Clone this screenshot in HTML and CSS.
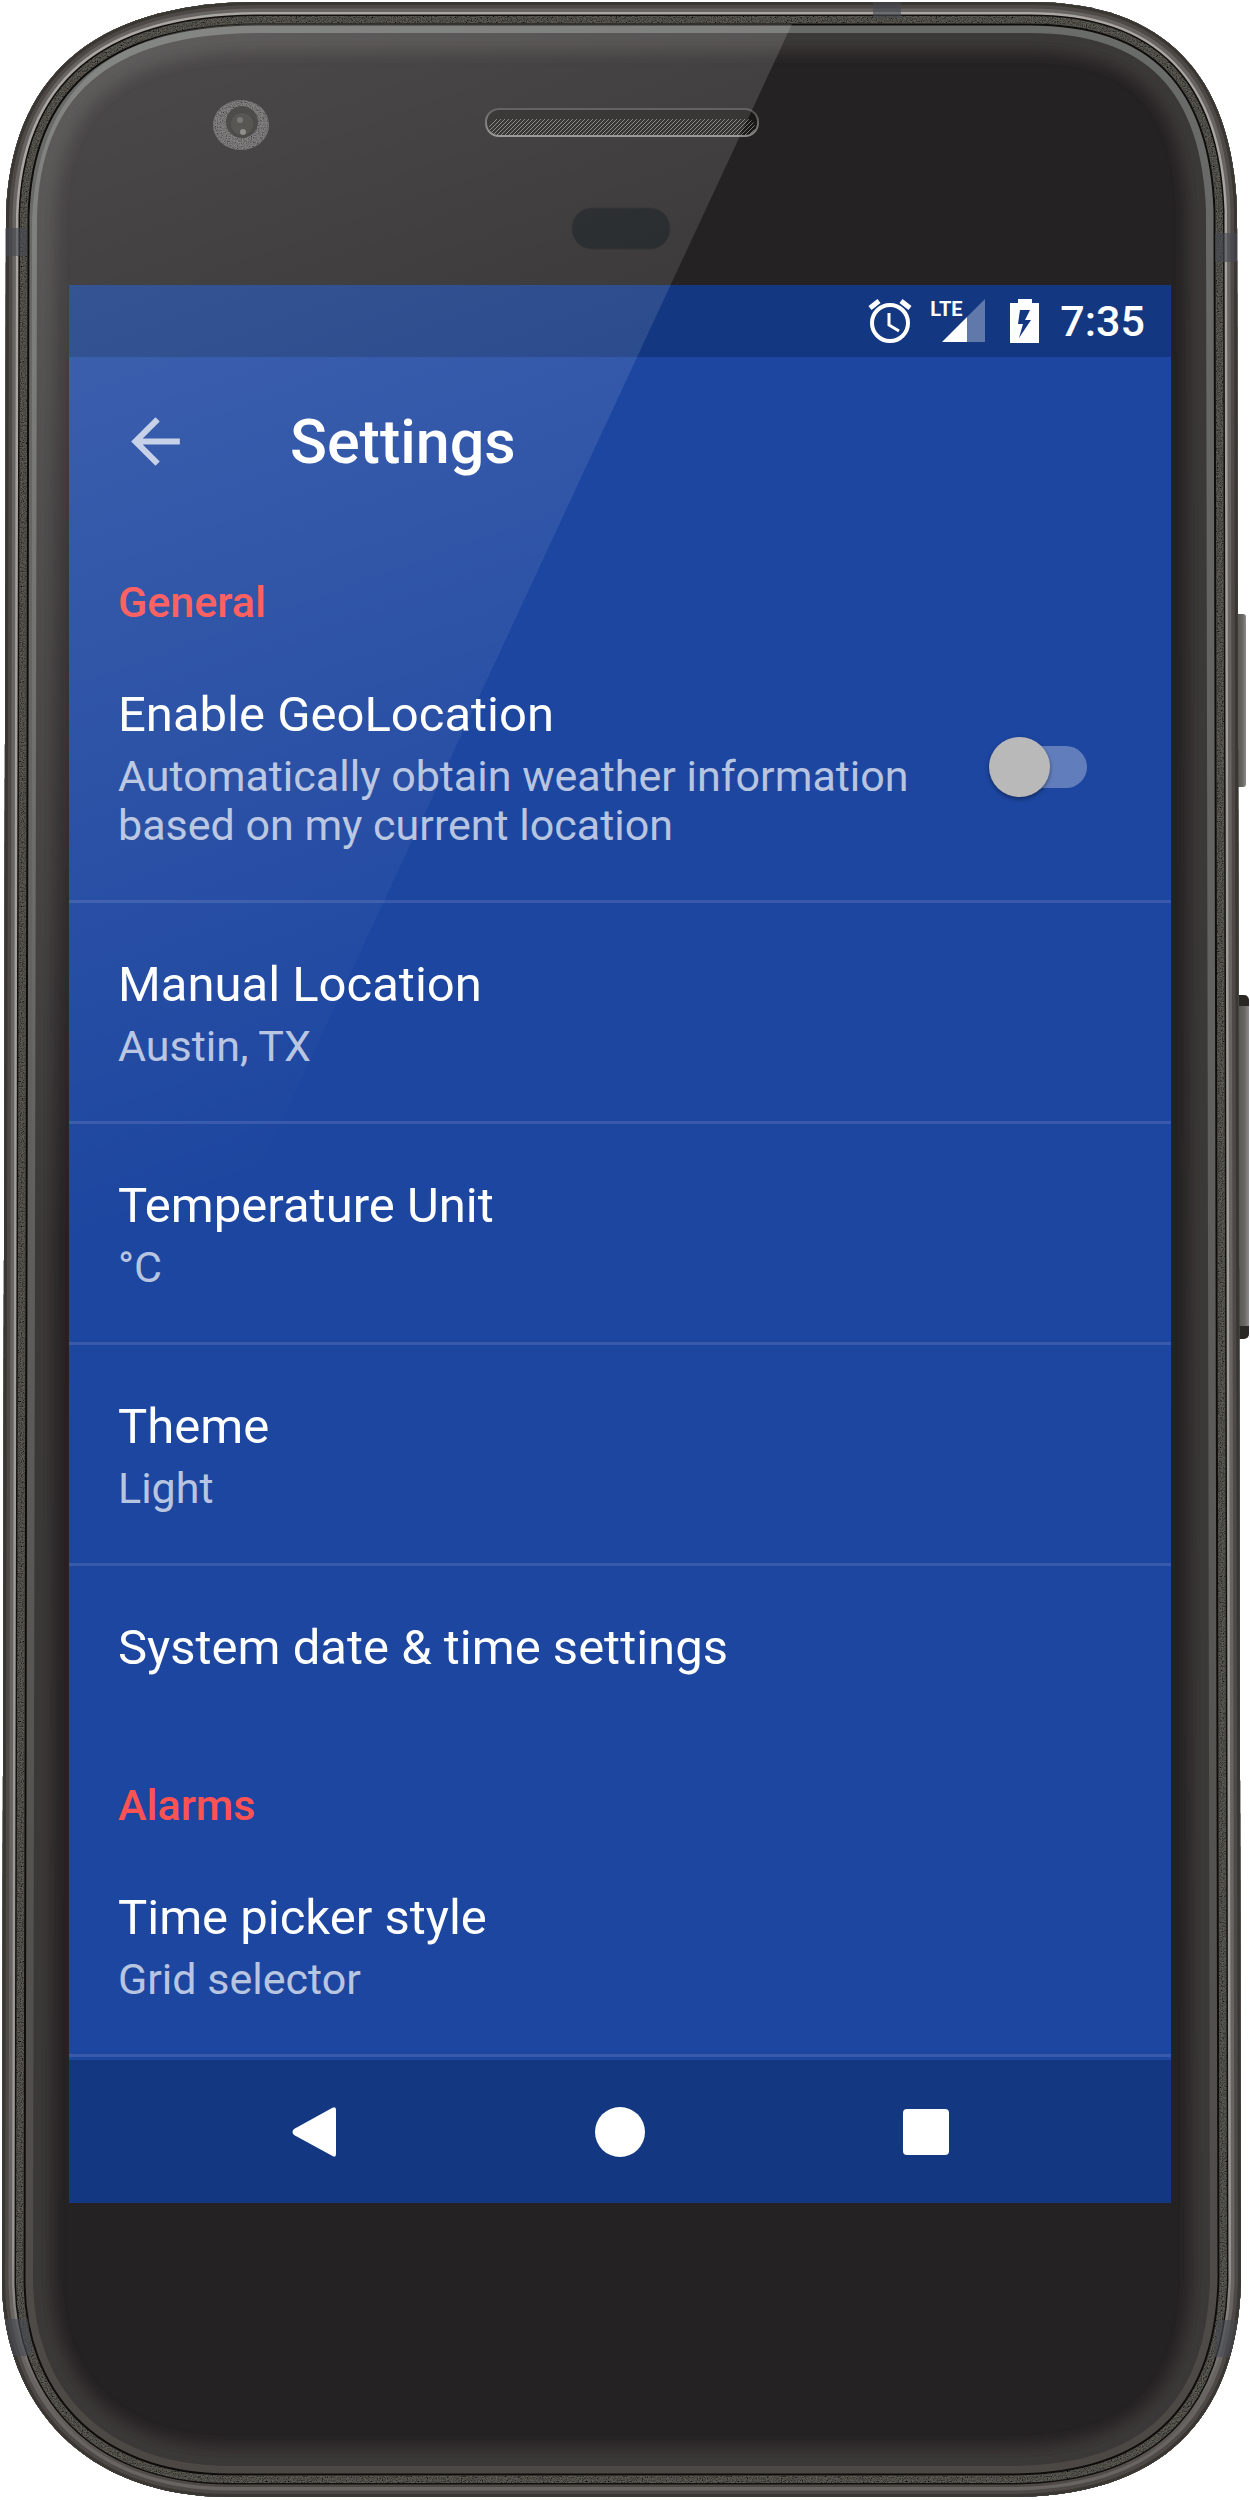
FILE: index.html
```html
<!DOCTYPE html>
<html lang="en">
<head>
<meta charset="utf-8">
<meta name="viewport" content="width=device-width, initial-scale=1">
<title>Settings</title>
<link rel="stylesheet" href="styles.css">
</head>
<body>
<div class="device">
  <svg class="shell" viewBox="0 0 1250 2500" preserveAspectRatio="none" aria-hidden="true">
    <defs>
      <path id="body" d="M6 215C10 80 90 2 260 2H1030C1165 2 1232 75 1237 210L1241 2280C1238 2400 1180 2497 1010 2497H230C80 2497 2 2400 2 2280Z"/>
      <clipPath id="bodyClip"><use href="#body"/></clipPath>
      <filter id="soft" x="-5%" y="-5%" width="110%" height="110%"><feGaussianBlur stdDeviation="7"/></filter>
      <filter id="grain" x="0" y="0" width="100%" height="100%">
        <feTurbulence type="fractalNoise" baseFrequency="0.8" numOctaves="2" result="n"/>
        <feColorMatrix in="n" type="matrix" values="0 0 0 0 0  0 0 0 0 0  0 0 0 0 0  0 2 0 0 -0.7" result="d"/>
        <feComposite in="d" in2="SourceGraphic" operator="in" result="g"/>
        <feMerge><feMergeNode in="SourceGraphic"/><feMergeNode in="g"/></feMerge>
      </filter>
      <linearGradient id="rim" x1="0" y1="0" x2="0" y2="1">
        <stop offset="0" stop-color="#6a6c69"/><stop offset=".4" stop-color="#626260"/><stop offset="1" stop-color="#4b4844"/>
      </linearGradient>
      <linearGradient id="shine" x1="0" y1="0" x2="0" y2="1">
        <stop offset="0" stop-color="#aaa6a2"/><stop offset=".9" stop-color="#9a9693"/><stop offset="1" stop-color="#4a4541"/>
      </linearGradient>
      <linearGradient id="key" x1="0" y1="0" x2="1" y2="0">
        <stop offset="0" stop-color="#4c4b47"/><stop offset=".7" stop-color="#686762"/><stop offset="1" stop-color="#8d8a8c"/>
      </linearGradient>
      <linearGradient id="slot" x1="0" y1="0" x2="0" y2="1">
        <stop offset="0" stop-color="#4a4848"/><stop offset="1" stop-color="#8a8988"/>
      </linearGradient>
      <pattern id="mesh" width="4" height="4" patternUnits="userSpaceOnUse">
        <path d="M-1 5L5 -1M-1 1L1 -1M3 5L5 3" stroke="#76746f" stroke-width="1"/>
      </pattern>
    </defs>
    <rect x="1234" y="614" width="12" height="173" rx="3" fill="url(#key)"/>
    <rect x="1234" y="995" width="15" height="344" rx="5" fill="#292825"/>
    <rect x="1234" y="1006" width="15" height="320" fill="url(#key)"/>
    <g clip-path="url(#bodyClip)" fill="none">
      <use href="#body" fill="#252223"/>
      <use href="#body" stroke="#3b3938" stroke-width="100" filter="url(#soft)"/>
      <use href="#body" stroke="url(#rim)" stroke-width="62"/>
      <use href="#body" stroke="#0f0d0b" stroke-width="47"/>
      <use href="#body" stroke="#5d5b54" stroke-width="43" filter="url(#grain)"/>
      <use href="#body" stroke="#12100e" stroke-width="28"/>
      <use href="#body" stroke="url(#shine)" stroke-width="25"/>
      <use href="#body" stroke="#686461" stroke-width="20"/>
      <use href="#body" stroke="#4e4946" stroke-width="13"/>
      <use href="#body" stroke="#3a3632" stroke-width="6"/>
      <g fill="#464a52" fill-opacity=".6">
        <path d="M0 228h27v28H0zM873 0h28v18h-28zM1215 233h28v29h-28zM0 2319h28l4 37H0zM1217 2320h28v37h-31z"/>
      </g>
    </g>
    <g class="camera">
      <ellipse cx="241" cy="125" rx="28" ry="25" fill="#6e6c6c" filter="url(#grain)"/>
      <circle cx="242" cy="122" r="16" fill="#2b2a28"/>
      <circle cx="242" cy="124" r="11" fill="#383733"/>
      <circle cx="240" cy="120" r="3" fill="#5f5f5c"/>
      <circle cx="243" cy="132" r="3" fill="#7a7a75"/>
    </g>
    <rect x="486" y="109" width="272" height="27" rx="13" fill="#191817" stroke="url(#slot)" stroke-width="2"/>
    <rect x="489" y="119" width="266" height="16" rx="8" fill="url(#mesh)"/>
    <rect x="572" y="208" width="98" height="41" rx="20" fill="#0e1214" stroke="#1b1919"/>
  </svg>

  <div class="screen">
    <div class="status">
      <svg class="status-icon" viewBox="0 0 44 44" role="img" aria-label="Alarm set">
        <g fill="none" stroke="#fff">
          <circle cx="22" cy="24" r="18" stroke-width="4"/>
          <path d="M2 9L11 2M42 9L33 2" stroke-width="5"/>
          <path d="M21 14V26L31 32" stroke-width="3"/>
        </g>
      </svg>
      <div class="signal">
        <span class="network">LTE</span>
        <svg viewBox="0 0 56 44" role="img" aria-label="Signal strength">
          <path d="M55 0V43H37V18Z" fill="#fff" fill-opacity=".33"/>
          <path d="M12 43L37 18V43Z" fill="#fff"/>
        </svg>
      </div>
      <svg class="battery" viewBox="0 0 29 44" role="img" aria-label="Battery charging">
        <path fill="#fff" fill-rule="evenodd" d="M8 0H22V4H29V44H0V4H8ZM10 11L8 25H13L9 39L21 21H15L20 11Z"/>
      </svg>
      <time class="clock">7:35</time>
    </div>

    <header class="appbar">
      <button class="back" aria-label="Back">
        <svg viewBox="0 0 24 24"><path fill="#fff" fill-opacity=".72" d="M20 11H7.800l5.600-5.600L12 4l-8 8 8 8 1.400-1.400L7.800 13H20v-2z"/></svg>
      </button>
      <h1>Settings</h1>
    </header>

    <main>
      <section>
        <h2>General</h2>
        <label class="row">
          <span class="text">
            <span class="title">Enable GeoLocation</span>
            <span class="summary">Automatically obtain weather information based on my current location</span>
          </span>
          <input class="switch" type="checkbox" role="switch">
        </label>
        <button class="row"><span class="text"><span class="title">Manual Location</span><span class="summary">Austin, TX</span></span></button>
        <button class="row"><span class="text"><span class="title">Temperature Unit</span><span class="summary">°C</span></span></button>
        <button class="row"><span class="text"><span class="title">Theme</span><span class="summary">Light</span></span></button>
        <button class="row last"><span class="text"><span class="title">System date &amp; time settings</span></span></button>
      </section>
      <section>
        <h2>Alarms</h2>
        <button class="row"><span class="text"><span class="title">Time picker style</span><span class="summary">Grid selector</span></span></button>
      </section>
    </main>

    <nav class="navbar" aria-label="System">
      <button aria-label="Back"><svg viewBox="0 0 50 50"><path fill="#fff" d="M43.500 .8Q47 -1.200 47 3V47Q47 51.200 43.500 49L5 28Q2 25 5 22Z"/></svg></button>
      <button aria-label="Home"><svg viewBox="0 0 50 50"><circle cx="25" cy="25" r="25" fill="#fff"/></svg></button>
      <button aria-label="Recent apps"><svg viewBox="0 0 50 50"><rect x="2" y="2" width="46" height="46" rx="4" fill="#fff"/></svg></button>
    </nav>
  </div>

  <svg class="glare" viewBox="0 0 1250 2500" preserveAspectRatio="none" aria-hidden="true">
    <defs>
      <linearGradient id="sheen" gradientUnits="userSpaceOnUse" x1="0" y1="0" x2="408" y2="1128">
        <stop offset="0" stop-color="#fff" stop-opacity=".19"/><stop offset="1" stop-color="#fff" stop-opacity="0"/>
      </linearGradient>
    </defs>
    <path fill="url(#sheen)" d="M32 220C38 96 102 24 260 24H792L230 1232H32Z"/>
  </svg>
</div>
</body>
</html>
```
FILE: styles.css
```css
:root {
  --blue: #1d46a0;
  --blue-dark: #133780;
  --line: #385aab;
  --accent: #ff5252;
}

* {
  box-sizing: border-box;
}

body {
  margin: 0;
  background: #fff;
  color: #fff;
  font-family: Roboto, "Noto Sans", sans-serif;
}

button {
  border: 0;
  padding: 0;
  background: none;
  color: inherit;
  font: inherit;
  text-align: left;
  cursor: pointer;
}

svg {
  display: block;
}

.device {
  position: relative;
  padding: 285px 79px 297px 69px;
}

.shell,
.glare {
  position: absolute;
  inset: 0;
  width: 100%;
  height: 100%;
}

.glare {
  pointer-events: none;
}

.screen {
  position: relative;
  background: var(--blue);
}

/* Status bar */
.status {
  display: flex;
  align-items: center;
  justify-content: flex-end;
  height: 72px;
  padding-right: 26px;
  background: var(--blue-dark);
}

.status-icon {
  width: 44px;
  height: 44px;
}

.signal {
  position: relative;
  margin-left: 18px;
}

.signal svg {
  width: 56px;
  height: 44px;
}

.network {
  position: absolute;
  top: 0;
  left: 0;
  font-size: 20px;
  font-weight: 700;
  line-height: 20px;
}

.battery {
  width: 29px;
  height: 44px;
  margin-left: 24px;
}

.clock {
  margin-left: 21px;
  font-size: 43px;
  font-weight: 500;
  line-height: 50px;
}

/* App bar */
.appbar {
  display: flex;
  align-items: center;
  gap: 98px;
  height: 166px;
  padding: 3px 50px 0;
}

.back svg {
  width: 73px;
  height: 73px;
}

h1 {
  margin: 0;
  font-size: 61px;
  font-weight: 500;
  line-height: 72px;
}

/* Preference list */
h2 {
  margin: 0;
  padding: 55px 49px 6px;
  color: var(--accent);
  font-size: 43px;
  font-weight: 500;
  line-height: 49px;
}

.row {
  display: flex;
  align-items: center;
  gap: 32px;
  width: 100%;
  padding: 54px 84px 50px 49px;
  border-bottom: 3px solid var(--line);
}

.row.last {
  border-bottom: 0;
}

.text {
  display: flex;
  flex: 1;
  flex-direction: column;
  gap: 9px;
}

.title {
  font-size: 49px;
  line-height: 56px;
}

.summary {
  color: rgba(255, 255, 255, 0.7);
  font-size: 43px;
  line-height: 49px;
}

.switch {
  position: relative;
  display: flex;
  align-items: center;
  flex: none;
  width: 98px;
  height: 60px;
  margin: 0 0 4px;
  appearance: none;
}

.switch::before {
  content: "";
  position: absolute;
  inset: 9px 0 9px 14px;
  border-radius: 21px;
  background: rgba(255, 255, 255, 0.3);
}

.switch::after {
  content: "";
  position: relative;
  width: 61px;
  height: 60px;
  border-radius: 50%;
  background: #b9b9b9;
  box-shadow: 0 2px 4px rgba(0, 0, 0, 0.4);
}

.switch:checked {
  justify-content: flex-end;
}

/* System navigation */
.navbar {
  display: grid;
  grid-template-columns: repeat(3, 1fr);
  height: 143px;
  margin-top: 3px;
  padding: 0 92px;
  background: var(--blue-dark);
}

.navbar button {
  display: grid;
  place-items: center;
}

.navbar svg {
  width: 50px;
  height: 50px;
}
```
